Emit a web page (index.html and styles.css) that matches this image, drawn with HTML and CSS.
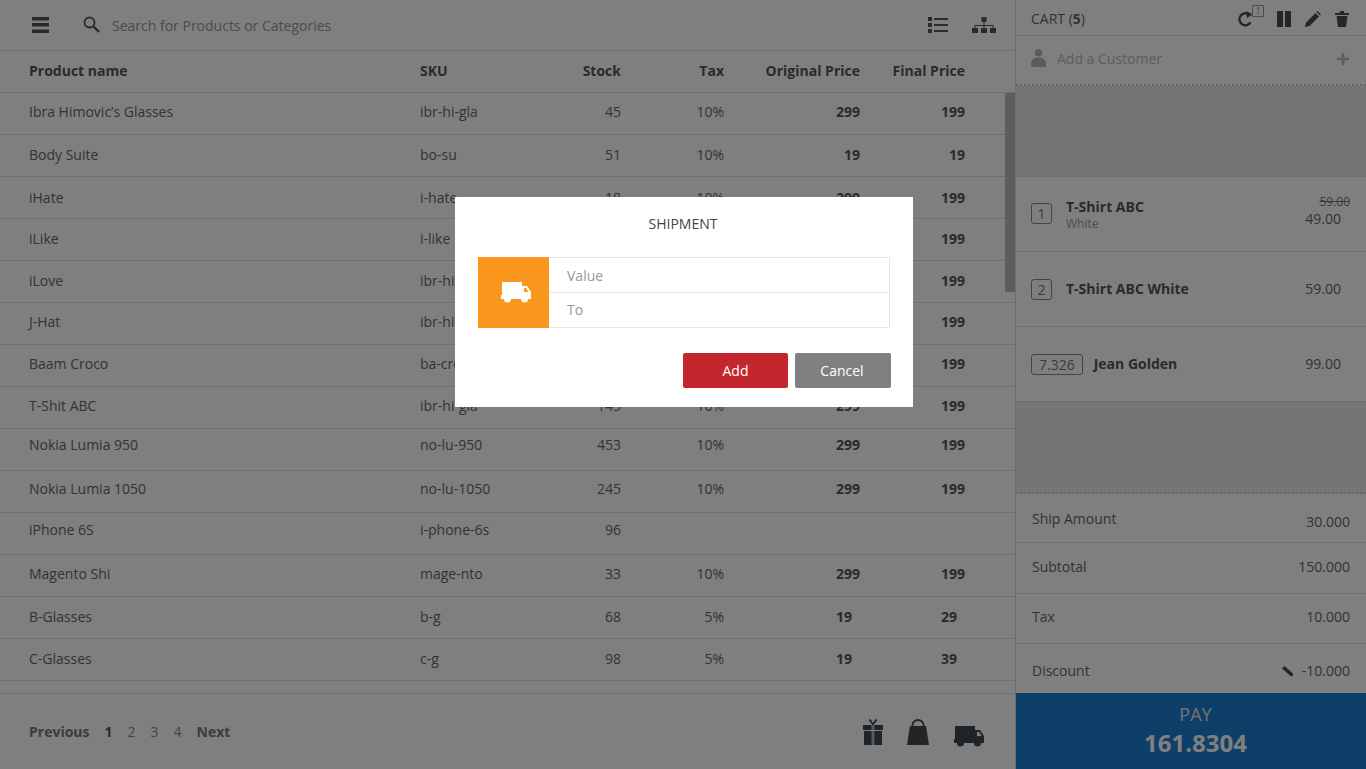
FILE: index.html
```html
<!DOCTYPE html>
<html lang="en">
<head>
  <meta charset="UTF-8" />
  <title>POS - Shipment</title>
  <link rel="stylesheet" href="styles.css">
</head>
<body>
<div class="page">
  <div class="products">
    <div class="topbar">
      <svg class="menu-icon" width="17" height="16" viewBox="0 0 17 16"><path d="M0 0h17v3.500H0zM0 6h17v3.500H0zM0 12.500h17V16H0z" fill="#555"/></svg>
      <svg class="search-icon" width="17" height="17" viewBox="0 0 17 17"><circle cx="6.500" cy="6.500" r="5" fill="none" stroke="#555" stroke-width="1.800"/><path d="M10.500 10.500L16 16" stroke="#555" stroke-width="2.400"/></svg>
      <span class="search-text">Search for Products or Categories</span>
      <svg class="list-icon" width="20" height="16" viewBox="0 0 20 16"><path d="M0 0h4v4H0zM0 6h4v4H0zM0 12h4v4H0zM6 1h14v2H6zM6 7h14v2H6zM6 13h14v2H6z" fill="#555"/></svg>
      <svg class="tree-icon" width="24" height="16" viewBox="0 0 24 16"><path d="M9.500 0h5v5h-5zM0 11h6v5H0zM9 11h6v5H9zM18 11h6v5h-6zM11.500 5h1v3h-1zM2.500 8h19v1h-19zM2.500 8h1v3h-1zM11.500 8h1v3h-1zM20.500 8h1v3h-1z" fill="#555"/></svg>
    </div>

    <div class="row head">
      <span>Product name</span><span>SKU</span><span class="num">Stock</span><span class="num">Tax</span><span class="num">Original Price</span><span class="num">Final Price</span>
    </div>

    <div class="rows">
      <div class="scroll-thumb"></div>
      <div class="row pt9"><span>Ibra Himovic’s Glasses</span><span>ibr-hi-gla</span><span class="num">45</span><span class="num">10%</span><b class="num">299</b><b class="num">199</b></div>
      <div class="row pt10"><span>Body Suite</span><span>bo-su</span><span class="num">51</span><span class="num">10%</span><b class="num">19</b><b class="num">19</b></div>
      <div class="row pt11"><span>iHate</span><span>i-hate</span><span class="num">18</span><span class="num">10%</span><b class="num">299</b><b class="num">199</b></div>
      <div class="row pt10"><span>iLike</span><span>i-like</span><span class="num">18</span><span class="num">10%</span><b class="num">299</b><b class="num">199</b></div>
      <div class="row pt10"><span>iLove</span><span>ibr-hi-gla</span><span class="num">45</span><span class="num">10%</span><b class="num">299</b><b class="num">199</b></div>
      <div class="row pt9"><span>J-Hat</span><span>ibr-hi-gla</span><span class="num">45</span><span class="num">10%</span><b class="num">299</b><b class="num">199</b></div>
      <div class="row pt9"><span>Baam Croco</span><span>ba-croco</span><span class="num">45</span><span class="num">10%</span><b class="num">299</b><b class="num">199</b></div>
      <div class="row pt9"><span>T-Shit ABC</span><span>ibr-hi-gla</span><span class="num">145</span><span class="num">10%</span><b class="num">299</b><b class="num">199</b></div>
      <div class="row pt6"><span>Nokia Lumia 950</span><span>no-lu-950</span><span class="num">453</span><span class="num">10%</span><b class="num">299</b><b class="num">199</b></div>
      <div class="row pt8"><span>Nokia Lumia 1050</span><span>no-lu-1050</span><span class="num">245</span><span class="num">10%</span><b class="num">299</b><b class="num">199</b></div>
      <div class="row pt7"><span>iPhone 6S</span><span>i-phone-6s</span><span class="num">96</span></div>
      <div class="row pt9"><span>Magento Shi</span><span>mage-nto</span><span class="num">33</span><span class="num">10%</span><b class="num">299</b><b class="num">199</b></div>
      <div class="row pt10"><span>B-Glasses</span><span>b-g</span><span class="num">68</span><span class="num">5%</span><b class="num inset">19</b><b class="num inset">29</b></div>
      <div class="row pt10"><span>C-Glasses</span><span>c-g</span><span class="num">98</span><span class="num">5%</span><b class="num inset">19</b><b class="num inset">39</b></div>
    </div>

    <div class="footer">
      <nav class="pager">
        <b>Previous</b><b class="page-num">1</b><span class="page-num">2</span><span class="page-num">3</span><span class="page-num">4</span><b class="page-next">Next</b>
      </nav>
      <div class="footer-icons">
        <svg class="gift" width="20" height="26" viewBox="0 0 20 26"><path d="M0 6h20v5H0zM1 12h18v14H1z" fill="#3f4850"/><path d="M8.500 6h3v20h-3z" fill="#fff" fill-opacity="0.6"/><path d="M9.500 6L5.500 1l2-1 2.500 4 2.500-4 2 1-4 5z" fill="#3f4850"/></svg>
        <svg class="bag" width="22" height="26" viewBox="0 0 22 26"><path d="M3 7h16l3 19H0z" fill="#484848"/><path d="M5.500 9V6a5.500 5 0 0 1 11 0v3" fill="none" stroke="#484848" stroke-width="1.800"/></svg>
        <svg class="truck" width="31" height="21" viewBox="0 0 31 21"><path d="M1 0h20v4h5l4 6v7h-3a3.500 3.500 0 0 1-7 0H10a3.500 3.500 0 0 1-7 0H0v-4h1z" fill="#3f4850"/><path d="M23 6h2l2.500 4H23z" fill="#fff"/></svg>
      </div>
    </div>
  </div>

  <aside class="cart">
    <div class="cart-head">
      <span class="cart-title">CART (<b>5</b>)</span>
      <div class="cart-tools">
        <span class="tool-refresh">
          <svg width="16" height="16" viewBox="0 0 16 16"><path d="M12.500 11.500A6 6 0 1 1 10 2.800" fill="none" stroke="#474e56" stroke-width="2.400"/><path d="M8.500 0l6 3.500-5.500 3.500z" fill="#474e56"/></svg>
          <span class="refresh-badge">1</span>
        </span>
        <svg class="tool-pause" width="14" height="16" viewBox="0 0 14 16"><path d="M0 0h6v16H0zM8 0h6v16H8z" fill="#474e56"/></svg>
        <svg class="tool-pencil" width="16" height="16" viewBox="0 0 16 16"><path d="M0 16l1-4.500L10.500 2 14 5.500 4.500 15zM11.500 1l1-1L16 3.500l-1 1z" fill="#474e56"/></svg>
        <svg class="tool-trash" width="14" height="16" viewBox="0 0 14 16"><path d="M0 2h5V0h4v2h5v2H0zM1.500 5h11L11 16H3z" fill="#474e56"/></svg>
      </div>
    </div>

    <div class="customer">
      <svg class="customer-icon" width="15" height="19" viewBox="0 0 16 20"><circle cx="8" cy="5" r="4" fill="#b8b8b8"/><path d="M0 20v-4c0-3 3-5 5-6h6c2 1 5 3 5 6v4z" fill="#b8b8b8"/></svg>
      <span class="customer-text">Add a Customer</span>
      <svg class="customer-add" width="12" height="12" viewBox="0 0 12 12"><path d="M4.700 0h2.600v4.700H12v2.600H7.300V12H4.700V7.300H0V4.700h4.700z" fill="#b8b8b8"/></svg>
    </div>

    <div class="cart-gap"></div>

    <div class="item">
      <span class="qty qty-first">1</span>
      <div class="item-name"><b>T-Shirt ABC</b><small>White</small></div>
      <div class="item-price price-stack"><s>59.00</s><span>49.00</span></div>
    </div>
    <div class="item">
      <span class="qty">2</span>
      <div class="item-name"><b>T-Shirt ABC White</b></div>
      <div class="item-price"><span>59.00</span></div>
    </div>
    <div class="item">
      <span class="qty qty-wide">7.326</span>
      <div class="item-name name-tight"><b>Jean Golden</b></div>
      <div class="item-price"><span>99.00</span></div>
    </div>

    <div class="cart-gap gap-low"></div>

    <div class="totals">
      <div class="total-row ship"><span>Ship Amount</span><span class="ship-val">30.000</span></div>
      <div class="total-row sub"><span>Subtotal</span><span>150.000</span></div>
      <div class="total-row tax"><span>Tax</span><span>10.000</span></div>
      <div class="total-row disc"><span>Discount</span>
        <span class="disc-val"><svg width="11" height="10" viewBox="0 0 11 10"><path d="M2.500 0L11 7.500V10H8.500L0 2.500z" fill="#474e56"/></svg>-10.000</span>
      </div>
    </div>

    <div class="pay">
      <span class="pay-label">PAY</span>
      <b class="pay-total">161.8304</b>
    </div>
  </aside>
</div>

<div class="overlay">
  <div class="modal">
    <div class="modal-title">SHIPMENT</div>
    <div class="ship-form">
      <div class="ship-icon">
        <svg width="31" height="21" viewBox="0 0 31 21"><path d="M1 0h20v4h5l4 6v7h-3a3.500 3.500 0 0 1-7 0H10a3.500 3.500 0 0 1-7 0H0v-4h1z" fill="#fff"/><path d="M23 6h2l2.500 4H23z" fill="#fb971e"/></svg>
      </div>
      <div class="ship-fields">
        <div class="field">Value</div>
        <div class="field">To</div>
      </div>
    </div>
    <div class="modal-buttons">
      <button class="btn btn-add">Add</button>
      <button class="btn btn-cancel">Cancel</button>
    </div>
  </div>
</div>
</body>
</html>
```

FILE: styles.css
```css
* {
  box-sizing: border-box;
}
body {
  margin: 0;
  height: 769px;
  overflow: hidden;
  background: #fff;
  font-family: "Open Sans", sans-serif;
  font-size: 14px;
  line-height: 20px;
  color: #666;
}
.page {
  display: flex;
  height: 769px;
}

/* products */
.products {
  width: 1015px;
  display: flex;
  flex-direction: column;
}
.topbar {
  height: 51px;
  display: flex;
  align-items: center;
  padding-left: 32px;
  padding-right: 19px;
  border-bottom: 1px solid #ddd;
}
.search-icon {
  margin-left: 34px;
  margin-top: -1px;
}
.search-text {
  margin-left: 12px;
  margin-top: 2px;
  color: #999;
  flex: 1;
}
.tree-icon {
  margin-left: 24px;
}
.row {
  height: 42px;
  display: grid;
  grid-template-columns: 391px 100px 101px 103px 136px 105px;
  padding-left: 29px;
  border-bottom: 1px solid #ddd;
  color: #666;
}
.row.head {
  padding-top: 10px;
  font-weight: bold;
  color: #555;
}
.num {
  text-align: right;
}
.row b {
  color: #555;
}
.inset {
  padding-right: 8px;
}
.pt6 { padding-top: 6px; }
.pt7 { padding-top: 7px; }
.pt8 { padding-top: 8px; }
.pt9 { padding-top: 9px; }
.pt10 { padding-top: 10px; }
.pt11 { padding-top: 11px; }
.rows {
  position: relative;
  flex: 1;
}
.scroll-thumb {
  position: absolute;
  top: 0;
  right: 0;
  width: 10px;
  height: 199px;
  background: #bbb;
}
.footer {
  height: 76px;
  display: flex;
  align-items: center;
  justify-content: space-between;
  padding: 0 30px 0 29px;
  border-top: 1px solid #ddd;
}
.pager {
  display: flex;
  color: #888;
}
.pager b {
  color: #777;
}
.pager b.page-num {
  color: #555;
}
.page-num {
  margin-left: 15px;
}
.page-next {
  margin-left: 15px;
}
.footer-icons {
  display: flex;
  align-items: flex-end;
}
.bag {
  margin-left: 24px;
}
.truck {
  margin-left: 25px;
  margin-bottom: -2px;
}

/* cart */
.cart {
  width: 351px;
  display: flex;
  flex-direction: column;
  border-left: 1px solid #ddd;
}
.cart-head {
  height: 36px;
  display: flex;
  align-items: center;
  justify-content: space-between;
  padding: 2px 17px 0 15px;
  border-bottom: 1px solid #ddd;
}
.cart-title {
  color: #666;
}
.cart-tools {
  display: flex;
  align-items: center;
}
.tool-refresh {
  position: relative;
  display: flex;
  margin-right: 23px;
}
.refresh-badge {
  position: absolute;
  top: -6px;
  left: 14px;
  width: 12px;
  height: 12px;
  border: 1px solid #999;
  border-radius: 1px;
  font-size: 9px;
  line-height: 10px;
  text-align: center;
  color: #999;
}
.tool-pencil {
  margin-left: 14px;
}
.tool-trash {
  margin-left: 14px;
}
.customer {
  height: 50px;
  display: flex;
  align-items: center;
  padding: 0 17px 2px 15px;
  border-bottom: 2px dotted #ccc;
}
.customer-icon {
  margin-top: -3px;
}
.customer-text {
  margin-left: 11px;
  flex: 1;
  color: #bbb;
}
.cart-gap {
  height: 91px;
  background: #ebebeb;
  border-bottom: 1px solid #ddd;
}
.gap-low {
  height: 92px;
  border-bottom: 2px dotted #ccc;
}
.item {
  height: 75px;
  display: flex;
  align-items: center;
  padding-left: 15px;
  padding-right: 25px;
  border-bottom: 1px solid #ddd;
}
.qty {
  height: 21px;
  min-width: 21px;
  border: 1px solid #888;
  border-radius: 3px;
  line-height: 20px;
  text-align: center;
  color: #777;
}
.qty-first {
  margin-top: -1px;
}
.qty-wide {
  padding: 0 7px;
}
.item-name {
  margin-left: 14px;
  flex: 1;
  display: flex;
  flex-direction: column;
  color: #555;
}
.name-tight {
  margin-left: 11px;
}
.item-name small {
  font-size: 12px;
  line-height: 14px;
  color: #999;
}
.item-price {
  display: flex;
  flex-direction: column;
  align-items: flex-end;
  color: #666;
}
.price-stack {
  margin-top: -4px;
}
.item-price s {
  font-size: 12px;
  line-height: 14px;
  margin-right: -9px;
  color: #777;
}
.totals {
  flex: 1;
}
.total-row {
  display: flex;
  justify-content: space-between;
  padding: 0 16px;
  border-bottom: 1px solid #ddd;
  color: #666;
}
.ship {
  height: 49px;
  padding-top: 15px;
}
.ship-val {
  padding-top: 3px;
}
.sub {
  height: 51px;
  padding-top: 14px;
}
.tax {
  height: 50px;
  padding-top: 13px;
}
.disc {
  border-bottom: none;
  padding-top: 17px;
}
.disc-val svg {
  margin-right: 9px;
}
.pay {
  height: 76px;
  display: flex;
  flex-direction: column;
  align-items: center;
  padding: 9px 0 0 9px;
  background: #1d7fd0;
  color: #fff;
}
.pay-label {
  font-size: 18px;
  line-height: 24px;
  color: #e6e6e6;
}
.pay-total {
  font-size: 24px;
  line-height: 32px;
  margin-top: 1px;
}

/* shipment dialog */
.overlay {
  position: fixed;
  top: 0;
  left: 0;
  width: 100%;
  height: 100%;
  padding: 197px 0 0 455px;
  background: rgba(0, 0, 0, 0.5);
}
.modal {
  width: 458px;
  height: 210px;
  padding: 0 22px 0 23px;
  background: #fff;
}
.modal-title {
  height: 60px;
  padding: 17px 3px 0 0;
  text-align: center;
  color: #444;
}
.ship-form {
  display: flex;
  height: 71px;
  width: 412px;
  border: 1px solid #e6e6e6;
}
.ship-icon {
  width: 71px;
  margin: -1px 0 -1px -1px;
  display: flex;
  align-items: center;
  justify-content: center;
  padding: 0 0 0 5px;
  background: #fb971e;
}
.ship-fields {
  flex: 1;
  display: flex;
  flex-direction: column;
}
.field {
  height: 34px;
  padding: 7px 18px 0;
  color: #999;
}
.field:first-child {
  height: 35px;
  padding-top: 8px;
  border-bottom: 1px solid #e6e6e6;
}
.modal-buttons {
  display: flex;
  justify-content: flex-end;
  gap: 7px;
  margin-top: 25px;
}
.btn {
  height: 35px;
  border: none;
  border-radius: 2px;
  font-family: inherit;
  font-size: 14px;
  color: #fff;
}
.btn-add {
  width: 105px;
  background: #c4262e;
}
.btn-cancel {
  width: 96px;
  padding: 0 2px 0 0;
  background: #808080;
}
```
